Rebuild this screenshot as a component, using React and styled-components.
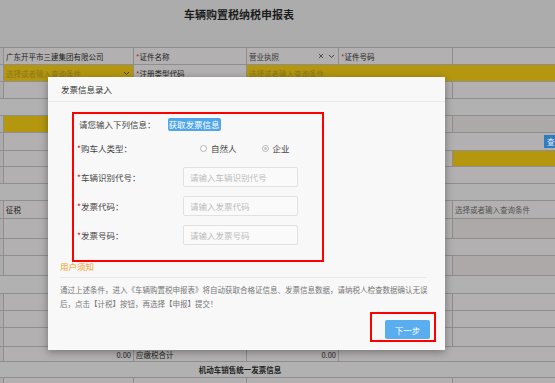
import React from 'react'
import styled, { createGlobalStyle } from 'styled-components'

const GlobalStyle = createGlobalStyle`
  html, body {
    margin: 0;
    padding: 0;
  }
  body {
    font-family: "Noto Sans CJK SC", "Noto Sans", sans-serif;
    background: #acacac;
  }
`

const Page = styled.div`
  position: relative;
  width: 555px;
  height: 383px;
  overflow: hidden;
  background: #acacac;
`

const Title = styled.h1`
  margin: 0;
  height: 47px;
  box-sizing: border-box;
  padding: 6px 77px 0 0;
  text-align: center;
  font-size: 11px;
  line-height: 16px;
  font-weight: bold;
  color: #1c1c1c;
`

const Table = styled.div`
  border-top: 1px solid #8e8e8e;
`

const Row = styled.div`
  display: flex;
  height: ${p => p.$h}px;
  box-sizing: border-box;
  border-bottom: 1px solid #8e8e8e;
  background: ${p => (p.$band ? '#b1b1b1' : 'transparent')};
  justify-content: ${p => (p.$center ? 'center' : 'flex-start')};
  padding-right: ${p => (p.$center ? 75 : 0)}px;
  align-items: center;
  font-size: 7.5px;
  font-weight: ${p => (p.$bold ? 'bold' : 'normal')};
  color: #222;
`

const cellBg = {
  plain: '#b2b0b0',
  yellow: '#b4970f',
  pink: '#aea9a9',
}

const Cell = styled.div`
  box-sizing: border-box;
  ${p => (p.$w ? `width: ${p.$w}px; flex: none;` : 'flex: 1;')}
  height: 100%;
  display: flex;
  align-items: center;
  justify-content: ${p => (p.$right ? 'flex-end' : 'flex-start')};
  gap: 4px;
  padding: 0 ${p => (p.$right ? 2 : 3)}px 0 2px;
  border-right: 1px solid #8e8e8e;
  background: ${p => cellBg[p.$kind || 'plain']};
  font-size: 7.5px;
  color: ${p => (p.$muted ? '#555' : '#222')};
  white-space: nowrap;
  overflow: ${p => (p.$spill ? 'visible' : 'hidden')};

  &:first-child {
    margin-left: 3px;
    border-left: 1px solid #8e8e8e;
  }
  &:last-child {
    border-right: none;
  }
`

const Req = styled.span`
  color: ${p => p.$light ? '#e02020' : '#b01c1c'};
`

const Hint = styled.span`
  color: #8c7623;
  flex: 1;
`

const SelectText = styled.span`
  flex: 1;
  color: #3a3a3a;
`

const Mark = styled.span`
  color: #444;
  font-size: 8px;
  display: flex;
  align-items: center;
`

const EdgeButton = styled.div`
  margin-left: auto;
  margin-right: -24px;
  width: 32px;
  height: 13px;
  background: #2e7ebf;
  color: #e8e8e8;
  font-size: 7.5px;
  line-height: 13px;
  padding-left: 3px;
  box-sizing: border-box;
`

const Chevron = () => (
  <svg width="7" height="5" viewBox="0 0 7 5">
    <path d="M1 1l2.5 2.5L6 1" fill="none" stroke="#333" strokeWidth="0.9" />
  </svg>
)

const Cross = () => (
  <svg width="6" height="6" viewBox="0 0 6 6">
    <path d="M1 1l4 4M5 1l-4 4" stroke="#444" strokeWidth="0.9" />
  </svg>
)

/* ---------- dialog ---------- */

const Dialog = styled.div`
  position: absolute;
  left: 48px;
  top: 77px;
  width: 397px;
  height: 273px;
  background: #f8f8f8;
  box-shadow: 0 2px 8px rgba(0, 0, 0, 0.35);
  display: flex;
  flex-direction: column;
`

const DialogHeader = styled.div`
  height: 25px;
  box-sizing: border-box;
  border-bottom: 1px solid #e8e8e8;
  padding-left: 13px;
  display: flex;
  align-items: center;
  font-size: 8.5px;
  color: #333;
`

const DialogBody = styled.div`
  flex: 1;
  display: flex;
  flex-direction: column;
  padding: 10px 18px 8px 12px;
`

const InfoFrame = styled.div`
  margin-left: 12px;
  width: 252px;
  height: 150px;
  box-sizing: border-box;
  border: 2px solid #ff0000;
  padding: 3px 0 0 3px;
  display: flex;
  flex-direction: column;
  gap: 9px;
`

const LeadRow = styled.div`
  height: 14px;
  margin-bottom: -2px;
  padding-left: 2px;
  display: flex;
  align-items: center;
  gap: 12px;
  font-size: 8.5px;
  color: #444;
`

const FetchButton = styled.span`
  height: 13px;
  padding: 0 1px;
  background: #4fa5ea;
  border-radius: 2px;
  color: #fff;
  font-size: 8.5px;
  line-height: 13px;
`

const FormRow = styled.div`
  height: 20px;
  display: flex;
  align-items: center;
`

const Label = styled.div`
  width: 106px;
  flex: none;
  font-size: 8.5px;
  color: #444;
`

const TextInput = styled.input`
  width: 115px;
  height: 20px;
  box-sizing: border-box;
  border: 1px solid #e1e1e1;
  border-radius: 2px;
  background: #fafafa;
  padding: 0 0 0 6px;
  margin: 0;
  font-family: inherit;
  font-size: 8.5px;
  color: #333;
  outline: none;

  &::placeholder {
    color: #bdbdbd;
  }
`

const RadioGroup = styled.div`
  display: flex;
  align-items: center;
  gap: 25px;
  margin-left: 17px;
`

const RadioItem = styled.label`
  display: flex;
  align-items: center;
  gap: 4px;
  font-size: 8.5px;
  color: #444;
`

const RadioDot = styled.span`
  width: 7px;
  height: 7px;
  box-sizing: border-box;
  border-radius: 50%;
  border: 1px solid #b5b5b5;
  background: #fff;
  display: flex;
  align-items: center;
  justify-content: center;

  &::after {
    content: '';
    width: 3px;
    height: 3px;
    border-radius: 50%;
    background: ${p => (p.$on ? '#c4c4c4' : 'transparent')};
  }
`

const NoticeTitle = styled.div`
  margin-left: 0;
  font-size: 8.5px;
  line-height: 9px;
  color: #f39a1a;
`

const Divider = styled.div`
  height: 1px;
  margin-top: 6px;
  background: #e7e7e7;
`

const NoticeText = styled.p`
  margin: 5px 0 0;
  font-size: 7.5px;
  line-height: 14px;
  color: #777;
  white-space: nowrap;
`

const ButtonFrame = styled.div`
  align-self: flex-end;
  margin: 1px -9px 0 0;
  width: 66px;
  height: 30px;
  box-sizing: border-box;
  border: 2px solid #ff0000;
  display: flex;
  justify-content: flex-end;
  align-items: flex-end;
  padding: 0 4px 1px 0;
`

const NextButton = styled.button`
  width: 45px;
  height: 19px;
  border: none;
  border-radius: 2px;
  background: #5aaef0;
  color: #fff;
  font-family: inherit;
  font-size: 8.5px;
  padding: 0;
`

const rows = [
  { h: 17, cells: [
    { w: 131, text: '广东开平市三建集团有限公司' },
    { w: 113, req: '证件名称' },
    { w: 92, select: '营业执照' },
    { w: 114, req: '证件号码' },
    {},
  ] },
  { h: 17, cells: [
    { w: 131, kind: 'yellow', hint: '选择或者输入查询条件', chevron: true },
    { w: 113, req: '注册类型代码' },
    { kind: 'yellow', hint: '选择或者输入查询条件' },
  ] },
  { h: 17, cells: [{ w: 131 }, { w: 113 }, { w: 92 }, { w: 114 }, {}] },
  { h: 17, band: true },
  { h: 17, cells: [{ w: 131, kind: 'yellow' }, { w: 319 }, { kind: 'pink' }] },
  { h: 18, cells: [{ w: 131 }, { button: '查询' }] },
  { h: 16, cells: [{ w: 131 }, { w: 319 }, { kind: 'yellow' }] },
  { h: 17, cells: [{ w: 131 }, {}] },
  { h: 17, band: true },
  { h: 18, cells: [{ w: 131, text: '征税' }, { w: 319 }, { text: '选择或者输入查询条件', muted: true }] },
  { h: 20, cells: [{ w: 131 }, { w: 319 }, { kind: 'pink' }] },
  { h: 17, cells: [{ w: 131 }, {}] },
  { h: 20, cells: [{ w: 131 }, { w: 319 }, { kind: 'pink' }] },
  { h: 18, band: true },
  { h: 17, cells: [{ w: 131 }, { w: 319 }, {}] },
  { h: 17, cells: [{ w: 131 }, { w: 319 }, {}] },
  { h: 19, cells: [{ w: 131 }, { w: 319 }, {}] },
  { h: 15, cells: [
    { w: 131, text: '0.00', right: true },
    { w: 113, text: '应缴税合计' },
    { w: 92, text: '0.00', right: true },
    {},
  ] },
  { h: 16, band: true, center: true, bold: true, text: '机动车销售统一发票信息' },
  { h: 20, cells: [{ w: 131 }, { w: 113 }, { w: 206 }, {}] },
]

const TableCell = ({ cell }) => (
  <Cell
    $w={cell.w}
    $kind={cell.kind}
    $right={cell.right}
    $muted={cell.muted}
    $spill={!!cell.button}
  >
    {cell.text}
    {cell.req && (
      <span>
        <Req>*</Req>
        {cell.req}
      </span>
    )}
    {cell.hint && <Hint>{cell.hint}</Hint>}
    {cell.chevron && (
      <Mark>
        <Chevron />
      </Mark>
    )}
    {cell.select && (
      <>
        <SelectText>{cell.select}</SelectText>
        <Mark>
          <Cross />
        </Mark>
        <Mark>
          <Chevron />
        </Mark>
      </>
    )}
    {cell.button && <EdgeButton>{cell.button}</EdgeButton>}
  </Cell>
)

const App = () => {
  return (
    <>
      <GlobalStyle />
      <Page>
        <Title>车辆购置税纳税申报表</Title>
        <Table>
          {rows.map((row, i) => (
            <Row key={i} $h={row.h} $band={row.band} $center={row.center} $bold={row.bold}>
              {row.text}
              {row.cells && row.cells.map((cell, j) => <TableCell key={j} cell={cell} />)}
            </Row>
          ))}
        </Table>

        <Dialog>
          <DialogHeader>发票信息录入</DialogHeader>
          <DialogBody>
            <InfoFrame>
              <LeadRow>
                请您输入下列信息：
                <FetchButton>获取发票信息</FetchButton>
              </LeadRow>
              <FormRow>
                <Label>
                  <Req $light>*</Req>购车人类型：
                </Label>
                <RadioGroup>
                  <RadioItem>
                    <RadioDot />
                    自然人
                  </RadioItem>
                  <RadioItem>
                    <RadioDot $on />
                    企业
                  </RadioItem>
                </RadioGroup>
              </FormRow>
              <FormRow>
                <Label>
                  <Req $light>*</Req>车辆识别代号：
                </Label>
                <TextInput placeholder="请输入车辆识别代号" />
              </FormRow>
              <FormRow>
                <Label>
                  <Req $light>*</Req>发票代码：
                </Label>
                <TextInput placeholder="请输入发票代码" />
              </FormRow>
              <FormRow>
                <Label>
                  <Req $light>*</Req>发票号码：
                </Label>
                <TextInput placeholder="请输入发票号码" />
              </FormRow>
            </InfoFrame>

            <NoticeTitle>用户须知</NoticeTitle>
            <Divider />
            <NoticeText>
              通过上述条件，进入《车辆购置税申报表》将自动获取合格证信息、发票信息数据，请纳税人检查数据确认无误
              <br />
              后，点击【计税】按钮，再选择【申报】提交！
            </NoticeText>

            <ButtonFrame>
              <NextButton>下一步</NextButton>
            </ButtonFrame>
          </DialogBody>
        </Dialog>
      </Page>
    </>
  )
}

export default App
